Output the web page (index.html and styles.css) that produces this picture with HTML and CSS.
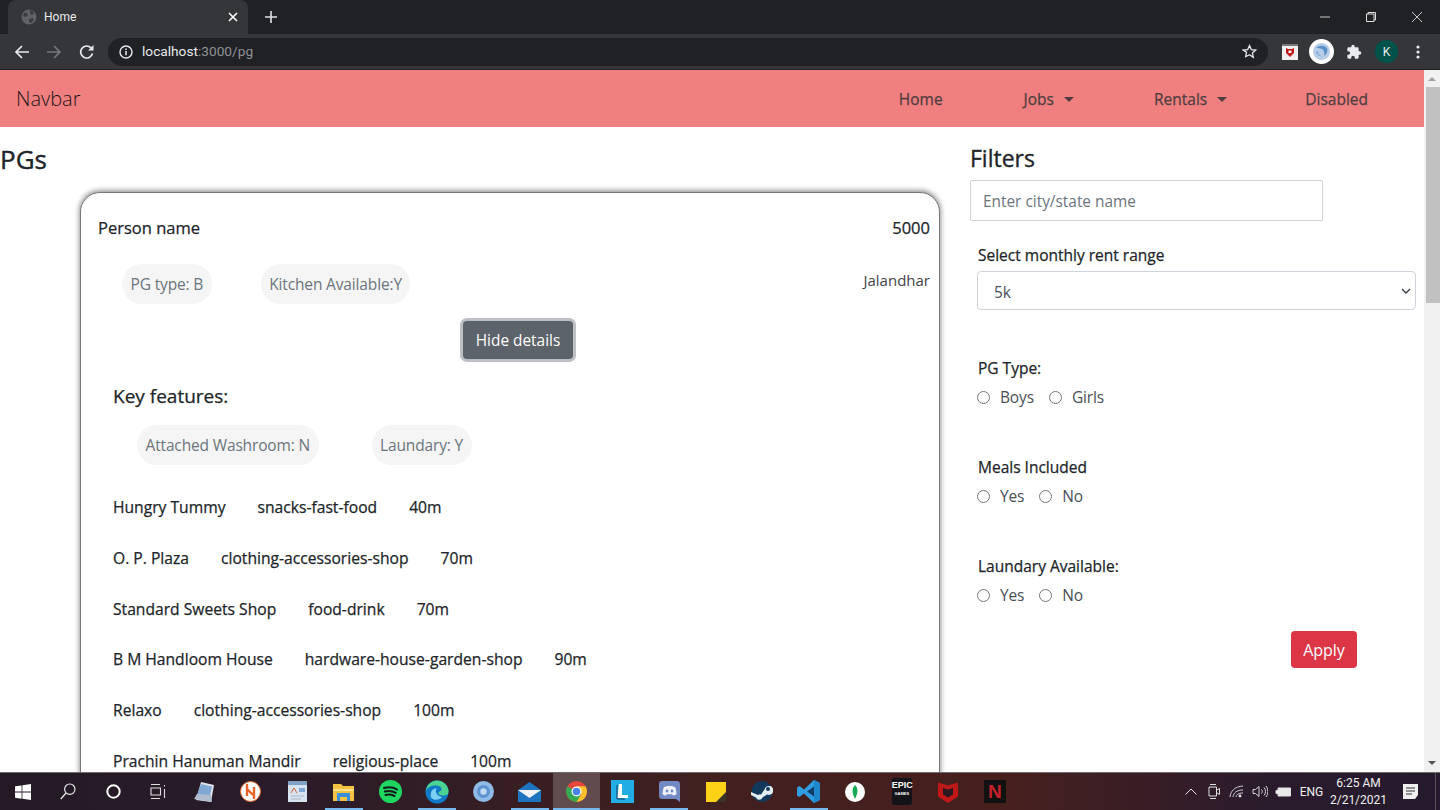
FILE: index.html
```html
<!DOCTYPE html>
<html lang="en">
<head>
    <meta charset="UTF-8">
    <title>Home</title>
    <link rel="stylesheet" href="styles.css">
</head>
<body>
    <!-- browser chrome -->
    <div class="tabstrip">
        <div class="tab">
            <svg class="globe" width="16" height="16" viewBox="0 0 16 16"><circle cx="8" cy="8" r="7.5" fill="#5f6368"/><path d="M3 3.500l3 .5 1 2-2 2-3-1zM9 1l3 1 1 3-3 1-1-2zM8 10l4-1 1 2-3 3-2-1z" fill="#3c3d41"/></svg>
            <span class="tab-title">Home</span>
            <svg class="tab-close" width="10" height="10" viewBox="0 0 10 10"><path d="M1 1l8 8M9 1l-8 8" stroke="#fff" stroke-width="1.6"/></svg>
        </div>
        <svg class="new-tab" width="12" height="12" viewBox="0 0 12 12"><path d="M6 0v12M0 6h12" stroke="#dee1e6" stroke-width="1.6"/></svg>
        <div class="window-btns">
            <svg width="12" height="12" viewBox="0 0 12 12"><path d="M1 6h10" stroke="#c8c8c8"/></svg>
            <svg width="12" height="12" viewBox="0 0 12 12"><path d="M3 3V1.500h7.500V9H9M1.500 3H9v7.500H1.500z" stroke="#e0e0e0" fill="none"/></svg>
            <svg width="12" height="12" viewBox="0 0 12 12"><path d="M1 1l10 10M11 1L1 11" stroke="#c8c8c8"/></svg>
        </div>
    </div>
    <div class="toolbar">
        <svg class="tool" width="16" height="16" viewBox="0 0 16 16"><path d="M15 8H2M8 2L2 8l6 6" stroke="#e8eaed" stroke-width="1.7" fill="none"/></svg>
        <svg class="tool" width="16" height="16" viewBox="0 0 16 16"><path d="M1 8h13M8 2l6 6-6 6" stroke="#74777b" stroke-width="1.7" fill="none"/></svg>
        <svg class="tool" width="16" height="16" viewBox="0 0 16 16"><path d="M13.500 9.500A6 6 0 1 1 12 3.800" stroke="#e8eaed" stroke-width="1.700" fill="none"/><path d="M14.500 1v5.500H9z" fill="#e8eaed"/></svg>
        <div class="omnibox">
            <svg width="14" height="14" viewBox="0 0 14 14"><circle cx="7" cy="7" r="6" stroke="#e8eaed" stroke-width="1.400" fill="none"/><path d="M7 6v4.200M7 3.600v1.500" stroke="#e8eaed" stroke-width="1.500"/></svg>
            <span class="url"><span class="url-host">localhost</span>:3000/pg</span>
            <svg class="star" width="15" height="15" viewBox="0 0 24 24"><path d="M12 2.500l2.900 6.400 7 .8-5.200 4.700 1.400 6.900L12 17l-6.100 3.300 1.400-6.900L2.100 9.700l7-.8z" stroke="#e8eaed" stroke-width="2" fill="none"/></svg>
        </div>
        <div class="extensions">
            <svg width="16" height="16" viewBox="0 0 16 16"><rect width="16" height="16" fill="#f1f1f1"/><rect width="16" height="2" fill="#777"/><path d="M4 4l2 1h4l2-1v5l-4 4-4-4z" fill="#c01818"/><path d="M6.500 6.500v2.500h3V6.500" fill="#f1f1f1"/></svg>
            <svg width="25" height="25" viewBox="0 0 25 25"><circle cx="12.500" cy="12.500" r="12.500" fill="#fff"/><circle cx="12.500" cy="12.500" r="8.500" fill="#b5cde8"/><path d="M7 9c3-3 8-3 11 0 1 3 0 6-3 8 1-3 0-6-2-7-2-1-4-1-6-1z" fill="#5b8fc7"/><path d="M9 12c0 3 2 5 5 5-3 1-6-1-7-4z" fill="#7ea8d8"/></svg>
            <svg class="puzzle" width="16" height="16" viewBox="0 0 24 24"><path d="M20.500 11H19V7a2 2 0 0 0-2-2h-4V3.500a2.500 2.500 0 0 0-5 0V5H4a2 2 0 0 0-2 2v3.800h1.500a2.700 2.700 0 0 1 0 5.400H2V20a2 2 0 0 0 2 2h3.800v-1.500a2.700 2.700 0 0 1 5.400 0V22H17a2 2 0 0 0 2-2v-4h1.500a2.500 2.500 0 0 0 0-5z" fill="#e8eaed"/></svg>
            <span class="avatar">K</span>
            <svg width="4" height="14" viewBox="0 0 4 14"><circle cx="2" cy="2" r="1.600" fill="#e8eaed"/><circle cx="2" cy="7" r="1.600" fill="#e8eaed"/><circle cx="2" cy="12" r="1.600" fill="#e8eaed"/></svg>
        </div>
    </div>

    <div class="page">
        <div class="viewport">
            <nav class="navbar">
                <span class="brand">Navbar</span>
                <div class="nav-links">
                    <span class="nav-link link-home">Home</span>
                    <span class="nav-link link-jobs">Jobs <i class="caret"></i></span>
                    <span class="nav-link link-rentals">Rentals <i class="caret"></i></span>
                    <span class="nav-link">Disabled</span>
                </div>
            </nav>
            <div class="content">
                <div class="listing">
                    <h3 class="page-title">PGs</h3>
                    <div class="card">
                        <div class="card-head">
                            <span class="person">Person name</span>
                            <span class="rent">5000</span>
                        </div>
                        <div class="card-sub">
                            <div class="pills">
                                <span class="pill">PG type: B</span>
                                <span class="pill">Kitchen Available:Y</span>
                            </div>
                            <span class="city">Jalandhar</span>
                        </div>
                        <div class="details-row">
                            <button class="btn btn-details">Hide details</button>
                        </div>
                        <div class="details">
                            <h5 class="features-title">Key features:</h5>
                            <div class="pills feature-pills">
                                <span class="pill">Attached Washroom: N</span>
                                <span class="pill">Laundary: Y</span>
                            </div>
                            <div class="places">
                                <div class="place"><span>Hungry Tummy</span><span>snacks-fast-food</span><span>40m</span></div>
                                <div class="place"><span>O. P. Plaza</span><span>clothing-accessories-shop</span><span>70m</span></div>
                                <div class="place"><span>Standard Sweets Shop</span><span>food-drink</span><span>70m</span></div>
                                <div class="place"><span>B M Handloom House</span><span>hardware-house-garden-shop</span><span>90m</span></div>
                                <div class="place"><span>Relaxo</span><span>clothing-accessories-shop</span><span>100m</span></div>
                                <div class="place"><span>Prachin Hanuman Mandir</span><span>religious-place</span><span>100m</span></div>
                            </div>
                        </div>
                    </div>
                </div>
                <aside class="filters">
                    <h4 class="filters-title">Filters</h4>
                    <input class="city-input" type="text" placeholder="Enter city/state name">
                    <div class="filter-body">
                        <label class="filter-label">Select monthly rent range</label>
                        <select class="rent-select"><option>5k</option></select>
                        <div class="filter-group first-group">
                            <div class="filter-label">PG Type:</div>
                            <div class="radios">
                                <label><input type="radio" name="pgtype">Boys</label>
                                <label><input type="radio" name="pgtype">Girls</label>
                            </div>
                        </div>
                        <div class="filter-group">
                            <div class="filter-label">Meals Included</div>
                            <div class="radios">
                                <label><input type="radio" name="meals">Yes</label>
                                <label><input type="radio" name="meals">No</label>
                            </div>
                        </div>
                        <div class="filter-group">
                            <div class="filter-label">Laundary Available:</div>
                            <div class="radios">
                                <label><input type="radio" name="laundary">Yes</label>
                                <label><input type="radio" name="laundary">No</label>
                            </div>
                        </div>
                        <button class="btn btn-apply">Apply</button>
                    </div>
                </aside>
            </div>
        </div>
        <div class="scrollbar">
            <svg width="16" height="17" viewBox="0 0 16 17"><path d="M4 11l4-4 4 4z" fill="#a3a3a3"/></svg>
            <div class="thumb"></div>
            <div class="track"></div>
            <svg width="16" height="17" viewBox="0 0 16 17"><path d="M4 6l4 4 4-4z" fill="#505050"/></svg>
        </div>
    </div>

    <!-- windows taskbar -->
    <div class="taskbar">
        <div class="sys-btn w45"><svg width="16" height="16" viewBox="0 0 16 16"><path d="M0 2.300l6.600-.9v6.200H0zM7.400 1.300L16 0v7.600H7.400zM0 8.400h6.600v6.300L0 13.800zM7.400 8.400H16V16l-8.600-1.200z" fill="#fff"/></svg></div>
        <div class="sys-btn w46"><svg width="16" height="17" viewBox="0 0 16 17"><circle cx="9.800" cy="6.200" r="5.200" stroke="#e8e8e8" stroke-width="1.200" fill="none"/><path d="M6 10L.8 16" stroke="#e8e8e8" stroke-width="1.300"/></svg></div>
        <div class="sys-btn w44"><svg width="15" height="15" viewBox="0 0 15 15"><circle cx="7.500" cy="7.500" r="6.200" stroke="#fff" stroke-width="2" fill="none"/></svg></div>
        <div class="sys-btn w46"><svg width="16" height="15" viewBox="0 0 16 15"><path d="M1 .5h9M1 14.500h9M1 4h9.500v7H1zM14.500 1v1.500M14.500 5v9" stroke="#e0e0e0" stroke-width="1.100" fill="none"/></svg></div>

        <div class="app"><svg width="20" height="20" viewBox="0 0 20 20"><path d="M7 0l13 3-3 17-15-2z" fill="#dfe4ea"/><path d="M7 2l11 2.500-2 9L3 13z" fill="#7fa8d4"/><path d="M0 17l3-5 14 1 1 7z" fill="#aebccd"/></svg></div>
        <div class="app"><svg width="21" height="21" viewBox="0 0 21 21"><circle cx="10.500" cy="10.500" r="10" fill="#fff" stroke="#e8622a"/><path d="M7 3v12M7 8l6 6M14 6v12" stroke="#e8622a" stroke-width="2.400" fill="none"/></svg></div>
        <div class="app"><svg width="19" height="21" viewBox="0 0 19 21"><rect width="19" height="21" fill="#d7e3ee"/><rect width="19" height="4" fill="#7fa2c4"/><path d="M3 12l3-5 3 5" stroke="#d9683a" fill="none"/><path d="M11 7h6v4h-6z" fill="#7fa8d4"/><path d="M3 15h13M3 18h10" stroke="#aab7c4"/></svg></div>
        <div class="app running"><svg width="21" height="18" viewBox="0 0 21 18"><path d="M0 1h8l2 2h11v15H0z" fill="#f5c242"/><path d="M0 6h21v2H0z" fill="#fde28a"/><path d="M4 10h13v8h-3v-4H7v4H4z" fill="#3a8fd8"/></svg></div>
        <div class="app"><svg width="23" height="23" viewBox="0 0 23 23"><circle cx="11.500" cy="11.500" r="11.500" fill="#1ed760"/><path d="M5 8c4-1 9-1 13 1.500M5.800 11.500c4-1 7.500-.7 11 1.300M6.500 15c3-.7 6-.5 9 1" stroke="#14181a" stroke-width="2" stroke-linecap="round" fill="none"/></svg></div>
        <div class="app running"><svg width="24" height="24" viewBox="0 0 24 24"><circle cx="12" cy="12" r="11.500" fill="#0f79c8"/><path d="M12 .5a11.500 11.500 0 0 1 11.500 11.500c0 2.500-2 3.500-5 3.500-3 0-5-.8-5-2.200 0-2.500 3-1.300 3-4.300 0-2-3-4-7-3.500C4.500 6 .8 9 .5 12 1 5.500 6 .5 12 .5z" fill="#4bd391"/><path d="M6 13c0-3 3-5 6-4.500-2 1.500-1.800 7 5 8.500-2 3-8 4-10.500 1C5 16.500 6 14.500 6 13z" fill="#7dcff5"/></svg></div>
        <div class="app"><svg width="21" height="21" viewBox="0 0 21 21"><circle cx="10.500" cy="10.500" r="10.500" fill="#8fbce6"/><circle cx="10.500" cy="10.500" r="6.500" fill="#5d93cf"/><circle cx="10.500" cy="10.500" r="3.200" fill="#c3d9ef"/></svg></div>
        <div class="app running mail-app"><svg width="23" height="20" viewBox="0 0 23 20"><path d="M0 8L11.500 0 23 8v12H0z" fill="#1f74bf"/><path d="M0 8h23l-11.500 8z" fill="#f2f6fa"/></svg></div>
        <div class="app running chrome-app"><svg width="21" height="21" viewBox="0 0 21 21"><circle cx="10.500" cy="10.500" r="10.500" fill="#e8453c"/><path d="M10.500 10.500L1.400 5.300A10.500 10.500 0 0 0 10.500 21l5-5z" fill="#34a853"/><path d="M10.500 5.300h9.100A10.500 10.500 0 0 1 10.500 21l4.800-8z" fill="#fbc02d"/><circle cx="10.500" cy="10.500" r="5" fill="#fff"/><circle cx="10.500" cy="10.500" r="3.800" fill="#4a84e8"/></svg></div>
        <div class="app"><svg width="23" height="23" viewBox="0 0 23 23"><rect width="23" height="23" fill="#23ade5"/><path d="M8 4h3v11h6v3H6z" fill="#fff"/><path d="M6 5v14h8" stroke="#13395e" fill="none"/></svg></div>
        <div class="app running"><svg width="21" height="21" viewBox="0 0 21 21"><path d="M3 0h15a3 3 0 0 1 3 3v18l-4-3H3a3 3 0 0 1-3-3V3a3 3 0 0 1 3-3z" fill="#7289c4"/><path d="M5 6c3-1.500 8-1.500 11 0 1 2 1.500 5 1.500 7-1 1-2 1.500-3.500 1.500l-.8-1.300h-5.400L7 14.500c-1.500 0-2.500-.5-3.500-1.500 0-2 .5-5 1.500-7z" fill="#eef1fa"/><circle cx="8" cy="10" r="1.400" fill="#7289c4"/><circle cx="13" cy="10" r="1.400" fill="#7289c4"/></svg></div>
        <div class="app"><svg width="20" height="20" viewBox="0 0 20 20"><rect width="20" height="20" fill="#fcd116"/><path d="M20 10v10H10z" fill="#3a3528"/></svg></div>
        <div class="app"><svg width="22" height="21" viewBox="0 0 22 21"><circle cx="11" cy="10.500" r="10.500" fill="#12395c"/><path d="M0 11l7 3a3.500 3.500 0 0 1 3-.5l3.500-5a4.500 4.500 0 1 1 2.500 5l-4.500 3a3.500 3.500 0 0 1-6.500 0L0 14z" fill="#e4edf2"/><circle cx="17" cy="8" r="2" fill="#12395c"/></svg></div>
        <div class="app running"><svg width="23" height="23" viewBox="0 0 23 23"><path d="M17 0l6 3v17l-6 3-10-9.500L2.500 17 0 15.500v-8L2.500 6 7 9.500z" fill="#2f9ee0"/><path d="M17 6.500L10 11.500l7 5z" fill="#0d3d66"/><path d="M17 0l6 3v17l-6 3z" fill="#1f86cc"/></svg></div>
        <div class="app"><svg width="20" height="20" viewBox="0 0 20 20"><circle cx="10" cy="10" r="10" fill="#fff"/><path d="M10 3c3 3 3.500 7 0 14-3.500-7-3-11 0-14z" fill="#13aa52"/></svg></div>
        <div class="app"><div class="epic">EPIC<small>GAMES</small></div></div>
        <div class="app"><svg width="20" height="23" viewBox="0 0 20 23"><path d="M0 2.500l10 3 10-3v14l-10 6.500L0 16.500z" fill="#c01818"/><path d="M5 8l5 1.500L15 8v6.500l-5 3-5-3z" fill="#2a1a20"/></svg></div>
        <div class="app"><div class="netflix">N</div></div>

        <div class="tray">
            <div class="tray-icon"><svg width="12" height="7" viewBox="0 0 12 7"><path d="M.5 6.500L6 1l5.500 5.500" stroke="#e8e8e8" fill="none"/></svg></div>
            <div class="tray-icon"><svg width="12" height="15" viewBox="0 0 12 15"><path d="M2 .5h6M2 14.500h6M1 3h7.500v9H1zM9 6l2.500-1.500v6L9 9" stroke="#e0e0e0" fill="none"/></svg></div>
            <div class="tray-icon"><svg width="15" height="13" viewBox="0 0 15 13"><path d="M1 12C1.500 6 6 1.500 14 1M4 12c.5-4 3.500-7 10-7M7 12c.3-2 2-4 7-4" stroke="#d0d0d0" fill="none"/><circle cx="11" cy="11" r="1.400" fill="#e8e8e8"/></svg></div>
            <div class="tray-icon"><svg width="16" height="13" viewBox="0 0 16 13"><path d="M1 4.500h2.500L7 1.500v10l-3.500-3H1zM9.500 4.500c1 1 1 3 0 4M12 2.500c2 2 2 6 0 8M14 1c2.500 3 2.500 8 0 11" stroke="#d8d8d8" fill="none"/></svg></div>
            <div class="tray-icon"><svg width="16" height="10" viewBox="0 0 16 10"><path d="M3 1h12.500v8H3V6.500H1v-3h2z" stroke="#e0e0e0" fill="#e8e8e8"/></svg></div>
            <span class="lang">ENG</span>
            <div class="clock"><span>6:25 AM</span><span>2/21/2021</span></div>
            <div class="notify"><svg width="15" height="15" viewBox="0 0 15 15"><path d="M0 0h15v11l-3 4H0z" fill="#f0f0f0"/><path d="M3 4h9M3 7h9M3 10h6" stroke="#333"/></svg></div>
        </div>
    </div>
</body>
</html>
```

FILE: styles.css
```css
* {
    box-sizing: border-box;
}
html, body {
    height: 810px;
    overflow: hidden;
}
body {
    margin: 0;
    font-family: "Open Sans", "Noto Sans", sans-serif;
    font-size: 15.500px;
    color: #212529;
    background: #fff;
}
svg {
    flex: none;
    display: block;
}

/* browser chrome */
.tabstrip {
    height: 34px;
    background: #202124;
    display: flex;
    align-items: center;
    padding-left: 8px;
}
.tab {
    width: 240px;
    height: 34px;
    background: #35363a;
    border-radius: 8px 8px 0 0;
    display: flex;
    align-items: center;
    padding: 0 10px 0 13px;
}
.tab-title {
    margin-left: 7px;
    font-family: "Roboto", sans-serif;
    font-size: 12px;
    color: #e8eaed;
}
.tab-close {
    margin-left: auto;
}
.new-tab {
    margin-left: 17px;
}
.window-btns {
    margin-left: auto;
    display: flex;
    gap: 34px;
    padding-right: 17px;
}
.toolbar {
    height: 36px;
    background: #35363a;
    border-bottom: 1px solid #222;
    display: flex;
    align-items: center;
    padding: 0 14px;
}
.tool {
    margin-right: 16px;
}
.tool:nth-child(2) {
    margin-right: 17px;
}
.omnibox {
    width: 1160px;
    height: 28px;
    margin-left: -3px;
    background: #202124;
    border-radius: 14px;
    display: flex;
    align-items: center;
    padding: 0 11px;
}
.url {
    margin: 0 0 1px 9px;
    font-family: "Roboto", sans-serif;
    font-size: 13.700px;
    color: #8f9296;
}
.url-host {
    color: #e8eaed;
}
.star {
    margin-left: auto;
}
.extensions {
    display: flex;
    align-items: center;
    margin-left: 14px;
    gap: 11px;
}
.puzzle {
    margin-left: 1px;
}
.avatar {
    width: 23px;
    height: 23px;
    margin: 0 7px 0 2px;
    border-radius: 50%;
    background: #00524a;
    color: #e8eaed;
    font-family: "Roboto", sans-serif;
    font-size: 12px;
    display: flex;
    align-items: center;
    justify-content: center;
}

/* page */
.page {
    height: 702px;
    display: flex;
    overflow: hidden;
}
.viewport {
    flex: 1;
    min-width: 0;
}
.scrollbar {
    width: 16px;
    background: #f1f1f1;
    display: flex;
    flex-direction: column;
}
.thumb {
    height: 216px;
    margin-left: 2px;
    background: #c1c1c1;
}
.track {
    flex: 1;
}
.navbar {
    height: 57px;
    background: lightcoral;
    display: flex;
    align-items: center;
    padding: 0 56px 0 16px;
}
.brand {
    font-size: 20px;
    font-weight: 300;
    color: #1f1414;
}
.nav-links {
    margin-left: auto;
    display: flex;
}
.nav-link {
    color: #4f3d3f;
    -webkit-text-stroke: .25px #4f3d3f;
}
.link-home {
    margin-right: 81px;
}
.link-jobs {
    margin-right: 80px;
}
.link-rentals {
    margin-right: 78px;
}
.caret {
    display: inline-block;
    margin-left: 6px;
    vertical-align: 3px;
    border-top: 5px solid #4f3d3f;
    border-left: 5px solid transparent;
    border-right: 5px solid transparent;
}
.content {
    display: flex;
}
.listing {
    width: 970px;
}
.page-title {
    margin: 16px 0 17px;
    font-size: 26px;
    font-weight: 500;
    line-height: 32px;
    -webkit-text-stroke: .4px #212529;
}
.card {
    width: 860px;
    margin-left: 80px;
    padding: 18px 9px 0 17px;
    height: 640px;
    background: #fff;
    border: 1px solid #777;
    border-radius: 20px;
    box-shadow: 0 -1px 5px 1px #999;
}
.card-head {
    display: flex;
    justify-content: space-between;
    align-items: center;
    height: 32px;
    font-size: 16.500px;
    -webkit-text-stroke: .25px #212529;
}
.card-sub {
    display: flex;
    justify-content: space-between;
    margin-top: 21px;
}
.city {
    margin-top: 6px;
    font-size: 15px;
    color: #444;
}
.pills {
    display: flex;
    padding-left: 24px;
    gap: 49px;
}
.feature-pills {
    gap: 53px;
}
.pill {
    height: 40px;
    padding: 0 8.500px;
    border-radius: 20px;
    background: #f5f5f5;
    color: #6c757d;
    letter-spacing: -.15px;
    display: flex;
    align-items: center;
}
.details-row {
    display: flex;
    justify-content: center;
    padding-left: 8px;
    margin-top: 17px;
}
.btn {
    border: 0;
    font-family: inherit;
    font-size: 15.400px;
    color: #fff;
    border-radius: 4px;
}
.btn-details {
    width: 110px;
    height: 38px;
    background: #5c636a;
    box-shadow: 0 0 0 3px #bcc0c4;
}
.details {
    padding-left: 15px;
}
.features-title {
    margin: 23px 0 15px;
    font-size: 19px;
    font-weight: 500;
    line-height: 28px;
    -webkit-text-stroke: .25px #212529;
}
.places {
    margin-top: 22px;
}
.place {
    display: flex;
    gap: 32px;
    height: 50.800px;
    font-size: 15.650px;
    line-height: 40px;
    -webkit-text-stroke: .25px #212529;
}

/* filters */
.filters {
    width: 454px;
}
.filters-title {
    margin: 15px 0 6px;
    font-size: 23px;
    font-weight: 500;
    line-height: 32px;
    -webkit-text-stroke: .35px #212529;
}
.city-input {
    display: block;
    width: 353px;
    height: 41px;
    padding: 2px 12px 0;
    border: 1px solid #ced4da;
    border-radius: 2px;
    font-family: inherit;
    font-size: 15.400px;
}
.city-input::placeholder {
    color: #6c757d;
}
.filter-body {
    padding-left: 8px;
}
.filter-label {
    display: block;
    line-height: 24px;
    -webkit-text-stroke: .25px #212529;
}
.filter-body > .filter-label {
    margin-top: 22px;
}
.rent-select {
    display: block;
    width: 439px;
    height: 39px;
    margin: 4px 0 0 -1px;
    padding: 2px 16px 0;
    appearance: none;
    background: #fff url("data:image/svg+xml,%3Csvg xmlns='http://www.w3.org/2000/svg' width='10' height='6'%3E%3Cpath d='M1 1l4 4 4-4' stroke='%23343a40' stroke-width='1.300' fill='none'/%3E%3C/svg%3E") no-repeat right 4px center;
    border: 1px solid #ced4da;
    border-radius: 4px;
    color: #495057;
    font-family: inherit;
    font-size: 15.500px;
}
.filter-group {
    height: 99px;
}
.first-group {
    margin-top: 46px;
}
.radios {
    display: flex;
    gap: 15px;
    margin: 5px 0 0 -1px;
    color: #495057;
    letter-spacing: -.15px;
}
.radios label {
    display: flex;
    align-items: center;
    height: 24px;
}
.radios input {
    width: 13px;
    height: 13px;
    margin: 0 10px 0 0;
}
.btn-apply {
    display: block;
    width: 66px;
    height: 37px;
    margin: -22px 0 0 313px;
    background: #dc3545;
    font-size: 16px;
}

/* taskbar */
.taskbar {
    height: 38px;
    display: flex;
    align-items: center;
    background: linear-gradient(90deg, #231a26 0%, #2a1c28 20%, #42201f 50%, #47201e 70%, #2a1b2c 88%, #251a2d 100%);
    border-top: 1px solid #6e6a6e;
}
.sys-btn, .app {
    height: 37px;
    display: flex;
    align-items: center;
    justify-content: center;
    flex: none;
}
.w45 { width: 45px; }
.w46 { width: 46px; }
.w44 { width: 44px; }
.app {
    width: 46.500px;
}
.running {
    background: linear-gradient(#76b9ed, #76b9ed) center bottom / 38px 2px no-repeat;
}
.chrome-app {
    background: linear-gradient(#76b9ed, #76b9ed) center bottom / 100% 2px no-repeat, rgba(255, 255, 255, .2);
}
.epic {
    width: 20px;
    height: 27px;
    padding-top: 2px;
    background: #15131a;
    color: #fff;
    font-family: "Liberation Sans", sans-serif;
    font-size: 9px;
    font-weight: 700;
    line-height: 10px;
    text-align: center;
    border-radius: 2px;
}
.epic small {
    display: block;
    font-size: 4px;
    line-height: 7px;
}
.netflix {
    width: 22px;
    height: 23px;
    background: #111;
    color: #c8202a;
    font-family: "Liberation Sans", sans-serif;
    font-size: 19px;
    font-weight: 700;
    line-height: 23px;
    text-align: center;
}
.tray {
    margin-left: auto;
    display: flex;
    align-items: center;
    height: 37px;
    padding-right: 3px;
    border-right: 1px solid #5a5058;
    margin-right: 4px;
    color: #f0f0f0;
    font-family: "Roboto", sans-serif;
    font-size: 12px;
}
.tray-icon {
    width: 23px;
    display: flex;
    justify-content: center;
}
.lang {
    width: 35px;
    text-align: center;
}
.clock {
    width: 59px;
    display: flex;
    flex-direction: column;
    align-items: center;
    line-height: 17px;
}
.notify {
    width: 44px;
    display: flex;
    justify-content: center;
}
```
